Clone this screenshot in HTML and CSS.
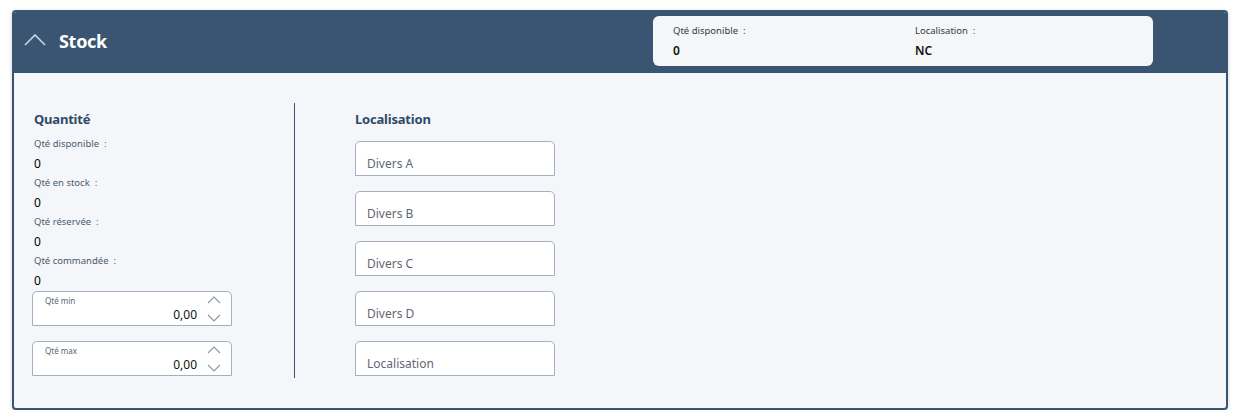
FILE: index.html
```html
<!DOCTYPE html>
<html lang="fr">
<head>
<meta charset="utf-8">
<link rel="stylesheet" href="styles.css">
</head>
<body>
<section class="card">
  <header class="card-head">
    <svg class="collapse" width="22" height="13" viewBox="0 0 22 13"><polyline points="1,12 11,2 21,12" fill="none" stroke="#c9d1da" stroke-width="1.6"/></svg>
    <h1 class="title">Stock</h1>
    <div class="summary">
      <div class="sum-item">
        <div class="sum-label">Qté disponible&nbsp; :</div>
        <div class="sum-value">0</div>
      </div>
      <div class="sum-item">
        <div class="sum-label">Localisation&nbsp; :</div>
        <div class="sum-value">NC</div>
      </div>
    </div>
  </header>
  <div class="card-body">
    <div class="col col-qty">
      <h2 class="sec-title">Quantité</h2>
      <div class="field-label first">Qté disponible&nbsp; :</div>
      <div class="field-value">0</div>
      <div class="field-label">Qté en stock&nbsp; :</div>
      <div class="field-value">0</div>
      <div class="field-label">Qté réservée&nbsp; :</div>
      <div class="field-value">0</div>
      <div class="field-label">Qté commandée&nbsp; :</div>
      <div class="field-value">0</div>
      <div class="num-input first">
        <div class="num-main">
          <span class="num-label">Qté min</span>
          <span class="num-value">0,00</span>
        </div>
        <div class="spin">
          <svg width="14" height="8" viewBox="0 0 14 8"><polyline points="1,7 7,1 13,7" fill="none" stroke="#8a96a3" stroke-width="1.1"/></svg>
          <svg width="14" height="8" viewBox="0 0 14 8"><polyline points="1,1 7,7 13,1" fill="none" stroke="#8a96a3" stroke-width="1.1"/></svg>
        </div>
      </div>
      <div class="num-input">
        <div class="num-main">
          <span class="num-label">Qté max</span>
          <span class="num-value">0,00</span>
        </div>
        <div class="spin">
          <svg width="14" height="8" viewBox="0 0 14 8"><polyline points="1,7 7,1 13,7" fill="none" stroke="#8a96a3" stroke-width="1.1"/></svg>
          <svg width="14" height="8" viewBox="0 0 14 8"><polyline points="1,1 7,7 13,1" fill="none" stroke="#8a96a3" stroke-width="1.1"/></svg>
        </div>
      </div>
    </div>
    <div class="col col-loc">
      <h2 class="sec-title">Localisation</h2>
      <div class="text-input">Divers A</div>
      <div class="text-input">Divers B</div>
      <div class="text-input">Divers C</div>
      <div class="text-input">Divers D</div>
      <div class="text-input">Localisation</div>
    </div>
  </div>
</section>
</body>
</html>
```
FILE: styles.css
```css
* { box-sizing: border-box; }
html, body { margin: 0; padding: 0; background: #ffffff; }
body {
  font-family: "Noto Sans", "Open Sans", "DejaVu Sans", sans-serif;
  padding: 10px 10px 0 12px;
}
.card {
  width: 1216px;
  height: 400px;
  border: 2px solid #3a5572;
  border-radius: 4px;
  background: #f4f6f9;
  box-shadow: 0 1px 4px rgba(0,0,0,0.18);
  display: flex;
  flex-direction: column;
  overflow: hidden;
}
.card-head {
  height: 61px;
  flex: none;
  background: #3a5572;
  display: flex;
  align-items: flex-start;
  padding-left: 10px;
}
.collapse {
  margin-top: 21px;
  flex: none;
}
.title {
  margin: 16px 0 0 13px;
  font-size: 18px;
  line-height: 26px;
  font-weight: 700;
  color: #ffffff;
  letter-spacing: -0.3px;
}
.summary {
  margin: 4px 73px 0 auto;
  width: 500px;
  height: 50px;
  background: #f4f6f8;
  border-radius: 6px;
  display: grid;
  grid-template-columns: 242px 1fr;
  padding: 7px 20px 0 20px;
}
.sum-label {
  font-size: 9.5px;
  line-height: 15px;
  color: #333a42;
}
.sum-value {
  font-size: 12px;
  line-height: 18px;
  margin-top: 4px;
  font-weight: 600;
  color: #111;
}
.card-body {
  flex: 1;
  display: flex;
  align-items: flex-start;
  padding-top: 30px;
}
.col { display: flex; flex-direction: column; }
.col-qty {
  width: 281px;
  height: 275px;
  padding: 7px 0 0 18px;
  border-right: 1px solid #3a5572;
}
.col-loc {
  padding: 7px 0 0 60px;
}
.sec-title {
  margin: 0;
  font-size: 13px;
  line-height: 18px;
  font-weight: 700;
  color: #2f4a68;
  letter-spacing: -0.2px;
}
.col-qty .sec-title { padding-left: 2px; }
.field-label {
  padding-left: 2px;
  margin-top: 5px;
  font-size: 9.5px;
  line-height: 14px;
  color: #4a5b6e;
}
.field-label.first { margin-top: 9px; }
.field-value {
  padding-left: 2px;
  margin-top: 5px;
  font-size: 12px;
  line-height: 15px;
  color: #000;
}
.num-input {
  width: 200px;
  height: 35px;
  border: 1px solid #a3b0bf;
  border-radius: 5px 5px 0 0;
  background: #ffffff;
  display: flex;
  margin-top: 15px;
}
.num-input.first { margin-top: 3px; }
.num-main {
  flex: 1;
  display: flex;
  flex-direction: column;
  padding: 3px 0 0 12px;
}
.num-label {
  font-size: 8px;
  line-height: 12px;
  color: #5b6470;
}
.num-value {
  align-self: flex-end;
  font-size: 12px;
  line-height: 16px;
  color: #111;
}
.spin {
  width: 34px;
  display: flex;
  flex-direction: column;
  align-items: center;
  justify-content: space-between;
  padding: 4px 0 3px;
}
.text-input {
  width: 200px;
  height: 35px;
  border: 1px solid #a3b0bf;
  border-radius: 5px 5px 0 0;
  background: #ffffff;
  padding: 14px 0 0 11px;
  font-size: 12px;
  line-height: 16px;
  color: #5f6771;
  margin-top: 15px;
}
.col-loc .sec-title + .text-input { margin-top: 13px; }
```
